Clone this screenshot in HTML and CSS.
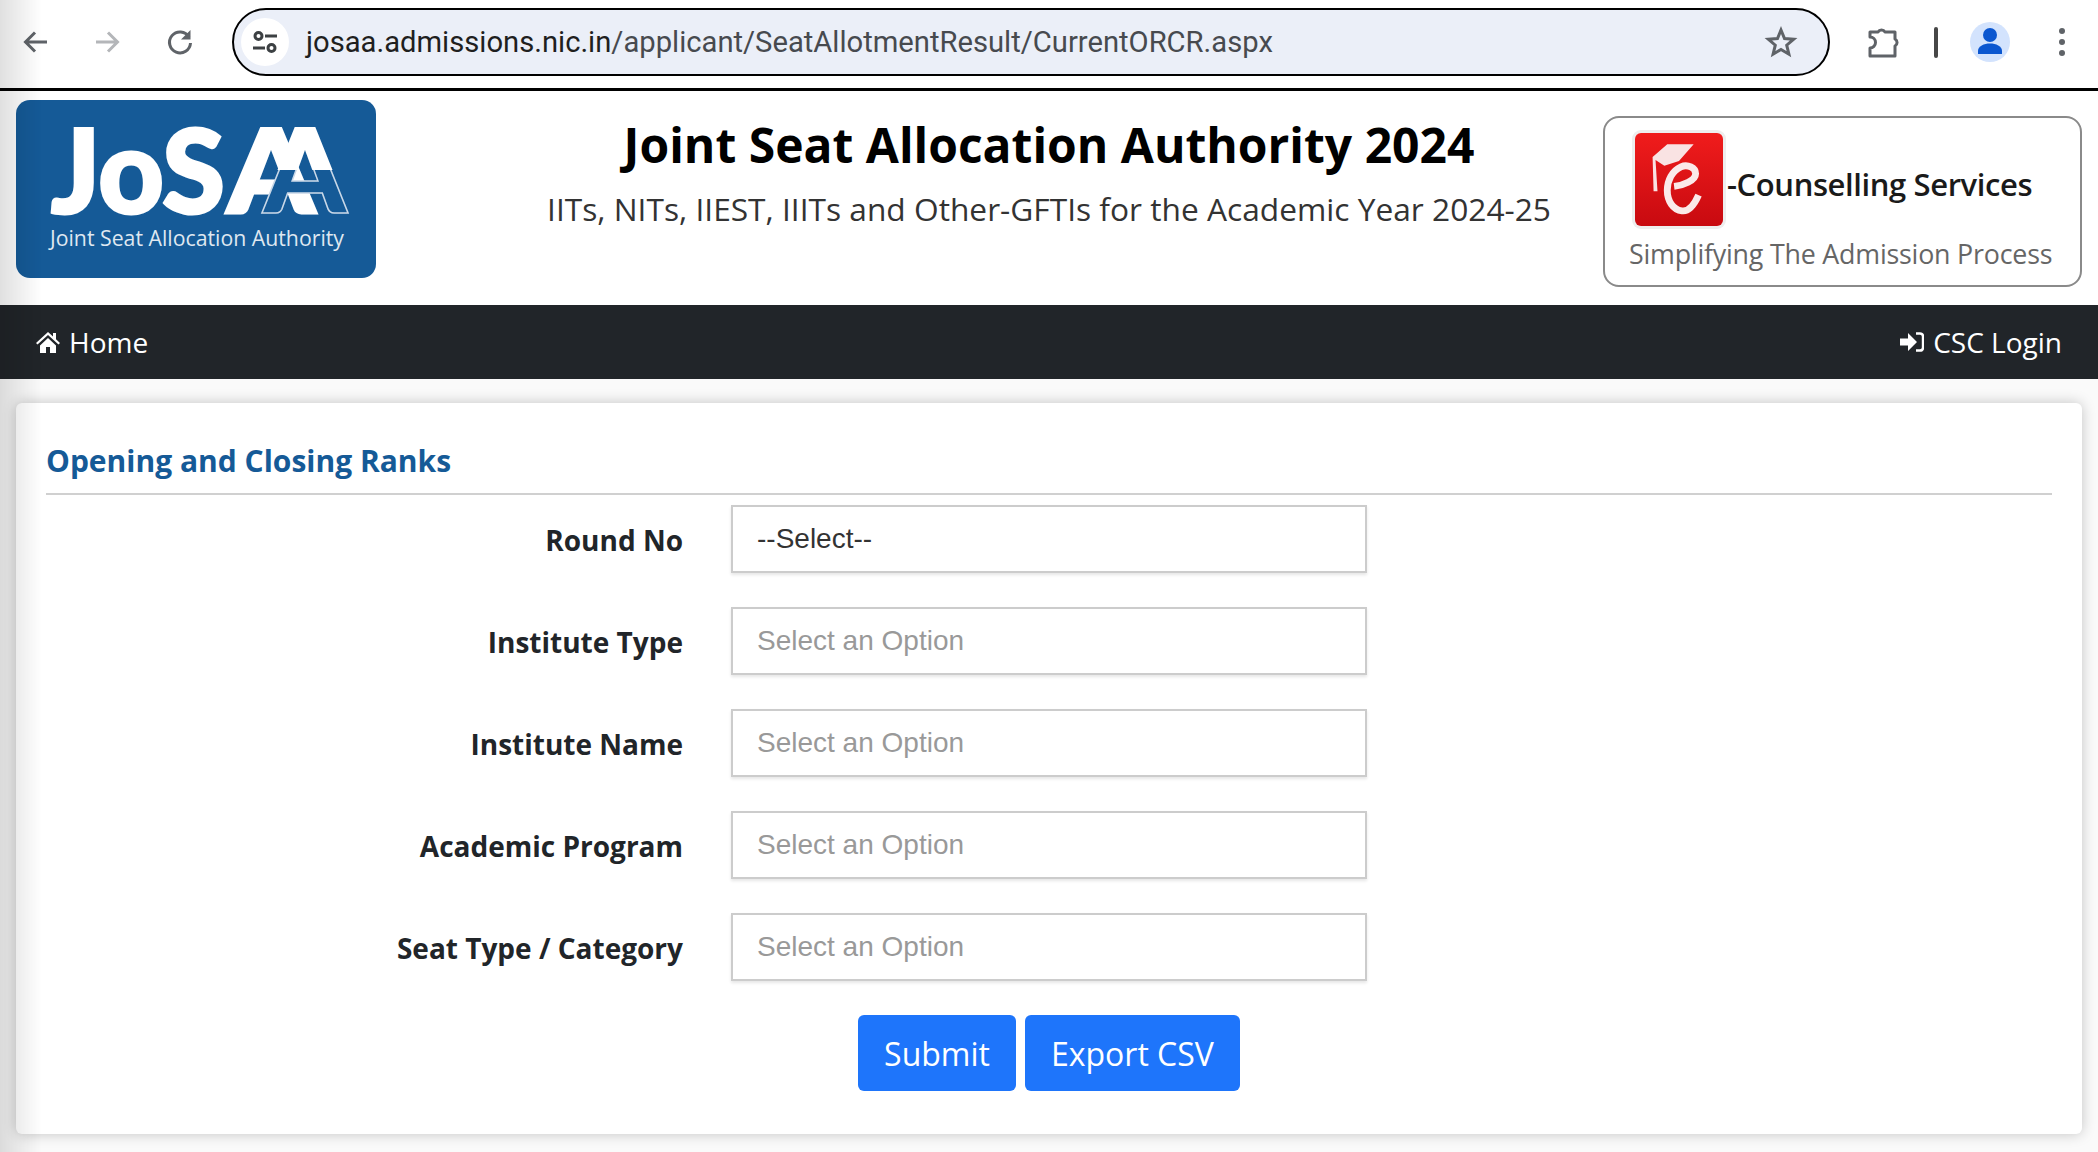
FILE: index.html
```html
<!DOCTYPE html>
<html lang="en">
<head>
  <meta charset="UTF-8" />
  <meta name="viewport" content="width=device-width, initial-scale=1.0"/>
  <title>Opening and Closing Ranks</title>
  <link rel="stylesheet" href="styles.css">
</head>
<body>

<!-- Browser toolbar -->
<div class="toolbar">
  <svg class="tool-icon back" viewBox="0 0 32 32"><path d="M27 16H6M15 6.500 5.500 16l9.500 9.500" fill="none" stroke="#5f6368" stroke-width="3"/></svg>
  <svg class="tool-icon forward" viewBox="0 0 32 32"><path d="M5 16h21M17 6.500l9.500 9.500-9.500 9.500" fill="none" stroke="#b4b6b9" stroke-width="3"/></svg>
  <svg class="tool-icon reload" viewBox="0 0 32 32"><path d="M25 11A10.500 10.500 0 1 0 26.500 17" fill="none" stroke="#5f6368" stroke-width="3"/><path d="M26.500 4V13.500H17z" fill="#5f6368"/></svg>

  <div class="address">
    <span class="site-info">
      <svg viewBox="0 0 32 32" width="32" height="32"><g fill="none" stroke="#3c4043" stroke-width="3"><circle cx="9.500" cy="10" r="3.500"/><circle cx="22.500" cy="22" r="3.500"/><path d="M16 10h12M4 22h12"/></g></svg>
    </span>
    <span class="url"><b>josaa.admissions.nic.in</b>/applicant/SeatAllotmentResult/CurrentORCR.aspx</span>
    <svg class="star" viewBox="0 0 34 34"><path d="M17 5l3.500 8.500 9.200.700-7 6 2.200 9L17 24.400 9.100 29.200l2.200-9-7-6 9.200-.700z" fill="none" stroke="#5f6368" stroke-width="3"/></svg>
  </div>

  <svg class="tool-icon puzzle" viewBox="0 0 34 34"><path d="M2 7h8a4 4 0 0 1 7 0h10v7a4 4 0 0 1 0 7v10H2v-8a5.500 5.500 0 0 0 0-11z" fill="none" stroke="#5f6368" stroke-width="3" stroke-linejoin="round"/></svg>
  <span class="divider"></span>
  <span class="avatar">
    <svg viewBox="0 0 40 40" width="40" height="40"><circle cx="20" cy="13" r="7" fill="#0b57d0"/><path d="M8 32v-3c0-5 6-7.500 12-7.500S32 24 32 29v3z" fill="#0b57d0"/></svg>
  </span>
  <span class="dots"><i></i><i></i><i></i></span>
</div>

<!-- Logos and title -->
<header class="site-header">
  <div class="josaa-logo">
    <svg viewBox="0 0 360 178" width="360" height="178">
      <defs>
        <clipPath id="aTop"><rect x="240" y="20" width="100" height="50"/></clipPath>
      </defs>
      <text x="35" y="113" class="logo-big" textLength="174" lengthAdjust="spacingAndGlyphs">JoS</text>
      <text x="211" y="113" class="logo-big" textLength="88" lengthAdjust="spacingAndGlyphs">A</text>
      <text x="247" y="113" class="logo-big logo-outline" textLength="84" lengthAdjust="spacingAndGlyphs">A</text>
      <text x="247" y="113" class="logo-big" textLength="84" lengthAdjust="spacingAndGlyphs" clip-path="url(#aTop)">A</text>
      <text x="34" y="146" class="logo-small" textLength="294" lengthAdjust="spacingAndGlyphs">Joint Seat Allocation Authority</text>
    </svg>
  </div>

  <div class="site-title">
    <h1>Joint Seat Allocation Authority 2024</h1>
    <p>IITs, NITs, IIEST, IIITs and Other-GFTIs for the Academic Year 2024-25</p>
  </div>

  <div class="ecounselling">
    <div class="ec-top">
      <span class="ec-badge">
        <svg viewBox="0 0 90 92" width="88" height="93">
          <path d="M18 23 33 10h27L45 27l-15 5-9-6 2 32h-4z" fill="#f9e3e3"/>
          <path d="M40 53c9-1 22-6 22-13 0-6-8-10-15-7-9 4-14 14-14 24 0 11 6 20 15 21 7 1 13-7 17-16" fill="none" stroke="#fbe9e9" stroke-width="7"/>
        </svg>
      </span>
      <span class="ec-name">-Counselling Services</span>
    </div>
    <div class="ec-tag">Simplifying The Admission Process</div>
  </div>
</header>

<nav class="main-nav">
  <a href="#">
    <svg viewBox="0 0 24 22" width="24" height="22"><path d="M12 1 0 12l1.500 1.600L12 4l10.500 9.600L24 12l-4-3.700V2h-3v3.500z" fill="#fff"/><path d="M4 14.500 12 7l8 7.500V22h-6v-6h-4v6H4z" fill="#fff"/></svg>
    Home
  </a>
  <a href="#">
    <svg viewBox="0 0 24 20" width="24" height="20"><path d="M0 6.500h8V1l9 9-9 9v-5.500H0z" fill="#fff"/><path d="M16 1.500h4c2 0 3 1.200 3 3v11c0 1.800-1 3-3 3h-4" fill="none" stroke="#fff" stroke-width="2.400"/></svg>
    CSC Login
  </a>
</nav>

<main class="page">
  <section class="card">
    <h2>Opening and Closing Ranks</h2>
    <div class="form-row">
      <label>Round No</label>
      <div class="field selected">--Select--</div>
    </div>
    <div class="form-row">
      <label>Institute Type</label>
      <div class="field">Select an Option</div>
    </div>
    <div class="form-row">
      <label>Institute Name</label>
      <div class="field">Select an Option</div>
    </div>
    <div class="form-row">
      <label>Academic Program</label>
      <div class="field">Select an Option</div>
    </div>
    <div class="form-row">
      <label>Seat Type / Category</label>
      <div class="field">Select an Option</div>
    </div>
    <div class="actions">
      <button type="button">Submit</button>
      <button type="button">Export CSV</button>
    </div>
  </section>
</main>

</body>
</html>
```

FILE: styles.css
```css
html, body {
  height: 100%;
}
body {
  font-family: "Open Sans", Arial, sans-serif;
  margin: 0;
  padding: 0;
  background: #fff;
  color: #212529;
  overflow: hidden;
}
/* soft shade down the left edge of the capture */
body::after {
  content: "";
  position: fixed;
  top: 0;
  bottom: 0;
  left: 0;
  width: 42px;
  background: linear-gradient(to right, rgba(0,0,0,.12), rgba(0,0,0,0));
  pointer-events: none;
}

/* Toolbar */
.toolbar {
  height: 91px;
  box-sizing: border-box;
  border-bottom: 3px solid #000;
  padding-bottom: 4px;
  display: flex;
  align-items: center;
  background: #fff;
}
.tool-icon {
  width: 32px;
  height: 32px;
  flex: none;
}
.back { margin-left: 20px; }
.forward { margin-left: 39px; }
.reload { margin-left: 41px; }
.address {
  flex: none;
  width: 1598px;
  height: 68px;
  margin-left: 36px;
  box-sizing: border-box;
  border: 2.500px solid #000;
  border-radius: 34px;
  background: #ebeff8;
  display: flex;
  align-items: center;
  padding-left: 7px;
  padding-right: 30px;
}
.site-info {
  width: 48px;
  height: 48px;
  border-radius: 50%;
  background: #fff;
  display: flex;
  align-items: center;
  justify-content: center;
  flex: none;
}
.url {
  font-family: Roboto, Arial, sans-serif;
  font-size: 29.200px;
  color: #474a4f;
  margin-left: 17px;
  flex: 1;
  white-space: nowrap;
}
.url b {
  font-weight: 400;
  color: #1f1f1f;
}
.star {
  width: 34px;
  height: 34px;
  flex: none;
}
.puzzle {
  width: 34px;
  height: 34px;
  margin-left: 38px;
}
.divider {
  width: 4px;
  height: 31px;
  background: #474747;
  border-radius: 2px;
  margin-left: 32px;
}
.avatar {
  width: 40px;
  height: 40px;
  border-radius: 50%;
  background: #d3e3fd;
  margin-left: 32px;
}
.dots {
  display: flex;
  flex-direction: column;
  gap: 5px;
  margin-left: 49px;
}
.dots i {
  width: 6px;
  height: 6px;
  border-radius: 50%;
  background: #5f6368;
}

/* Header */
.site-header {
  height: 214px;
  box-sizing: border-box;
  display: grid;
  grid-template-columns: 1fr auto 1fr;
  align-items: start;
  padding: 9px 16px 0;
}
.josaa-logo {
  width: 360px;
  height: 178px;
  background: #155a97;
  border-radius: 14px;
  overflow: hidden;
}
.josaa-logo svg {
  display: block;
}
.logo-big {
  font-family: Lato, "Open Sans", sans-serif;
  font-weight: 900;
  font-size: 116px;
  fill: #fff;
  stroke: #fff;
  stroke-width: 3px;
}
.logo-outline {
  fill: #155a97;
  stroke: #c9d8e8;
  stroke-width: 1.500px;
}
.logo-small {
  font-family: "Open Sans", sans-serif;
  font-size: 21px;
  fill: #dfe8f1;
}
.site-title {
  text-align: center;
  padding-top: 15px;
}
.site-title h1 {
  margin: 0;
  font-size: 48px;
  line-height: 60px;
  font-weight: 700;
  color: #000;
}
.site-title p {
  margin: 11px 0 0;
  font-size: 31.700px;
  line-height: 46px;
  color: #333;
}
.ecounselling {
  justify-self: end;
  width: 479px;
  height: 171px;
  margin-top: 16px;
  box-sizing: border-box;
  border: 2px solid #8a8a8a;
  border-radius: 16px;
  background: #fff;
  padding: 12px 0 0 30px;
  font-family: "Open Sans", sans-serif;
}
.ec-top {
  display: flex;
  align-items: center;
  height: 98px;
}
.ec-badge {
  width: 88px;
  height: 93px;
  border-radius: 6px;
  background: linear-gradient(#f01c1c, #c80a10);
  box-shadow: 0 0 0 3px #eee;
  flex: none;
}
.ec-badge svg {
  display: block;
}
.ec-name {
  font-size: 31px;
  font-weight: 600;
  letter-spacing: -.4px;
  color: #1a1a1a;
  margin-top: 10px;
  margin-left: 4px;
}
.ec-tag {
  font-size: 26.800px;
  letter-spacing: -.2px;
  color: #666;
  margin-top: 7px;
  margin-left: -6px;
  white-space: nowrap;
}

/* Nav */
.main-nav {
  height: 74px;
  background: #212529;
  display: flex;
  align-items: center;
  justify-content: space-between;
  padding: 0 36px;
}
.main-nav a {
  color: #fff;
  text-decoration: none;
  font-size: 28px;
  display: flex;
  align-items: center;
  gap: 9px;
}

/* Form card */
.page {
  background: #fafafa;
  padding: 24px 16px 0;
  height: 773px;
  box-sizing: border-box;
}
.card {
  background: #fff;
  border-radius: 6px;
  box-shadow: 0 0 14px rgba(0,0,0,.22);
  height: 731px;
  box-sizing: border-box;
  padding: 35px 30px 0;
}
.card h2 {
  margin: 0 0 10px;
  height: 57px;
  box-sizing: border-box;
  border-bottom: 2px solid #d0d0d0;
  font-size: 30px;
  line-height: 46px;
  font-weight: 700;
  color: #155a97;
}
.form-row {
  display: grid;
  grid-template-columns: 637px 636px;
  column-gap: 48px;
  align-items: center;
  height: 68px;
  margin-bottom: 34px;
}
.form-row label {
  text-align: right;
  font-size: 28px;
  font-weight: 700;
  color: #212529;
  padding-top: 2px;
}
.field {
  height: 68px;
  box-sizing: border-box;
  border: 2px solid #ccc;
  box-shadow: 0 2px 3px rgba(0,0,0,.1);
  background: #fff;
  display: flex;
  align-items: center;
  padding-left: 24px;
  font-family: "Liberation Sans", Arial, sans-serif;
  font-size: 28px;
  color: #999;
}
.field.selected {
  color: #333;
}
.actions {
  display: flex;
  justify-content: center;
  gap: 9px;
  margin-top: 1px;
}
.actions button {
  height: 76px;
  padding: 0 26px;
  border: none;
  border-radius: 6px;
  background: #1e75fb;
  color: #fff;
  font-family: "Open Sans", Arial, sans-serif;
  font-size: 32px;
}
```
